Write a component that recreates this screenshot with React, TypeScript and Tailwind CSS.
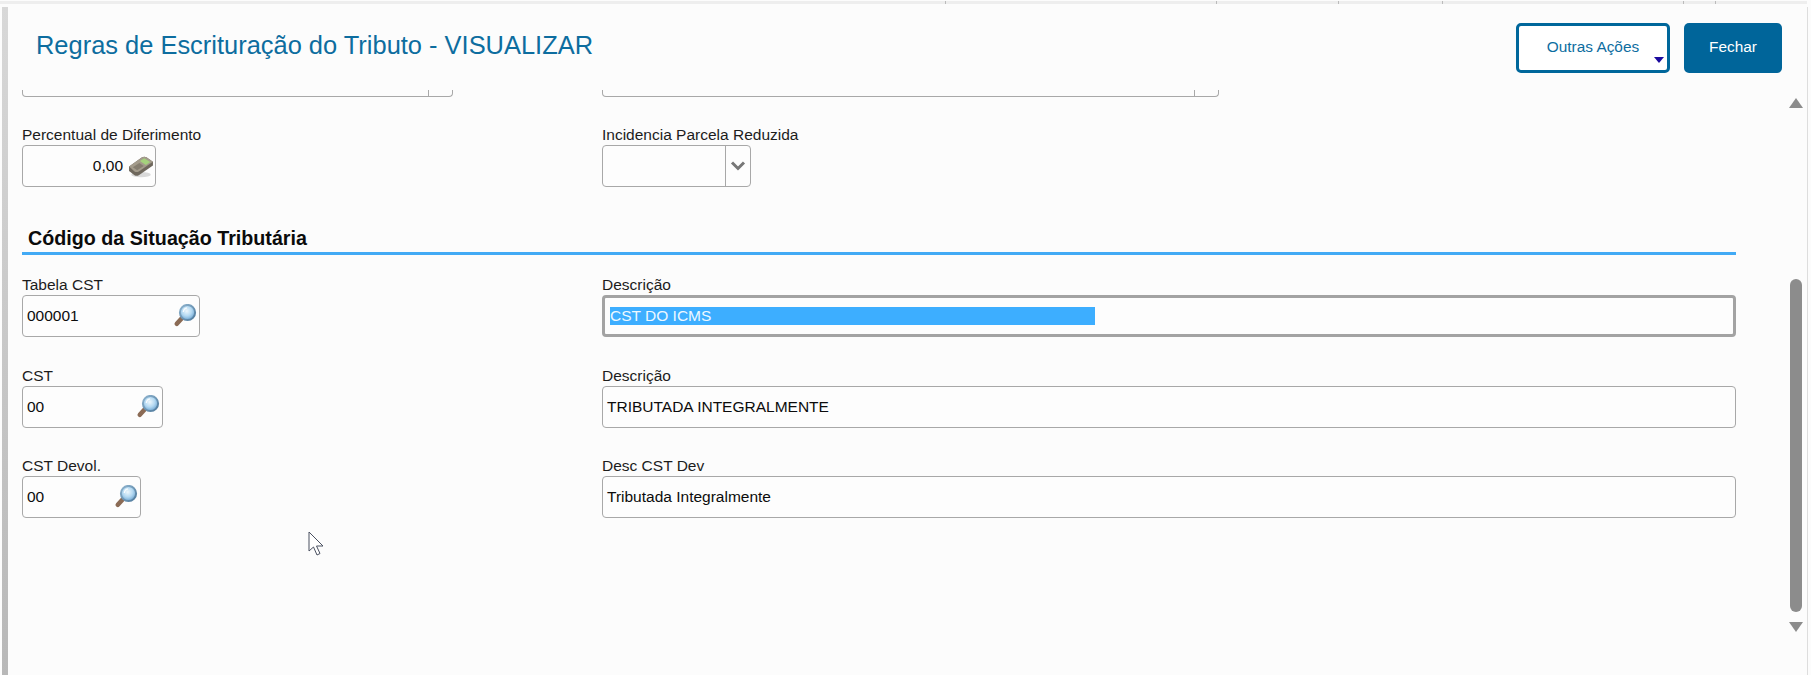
import React from "react";

const font = { fontFamily: '"Liberation Sans", Arial, sans-serif' };

function Magnifier() {
  return (
    <svg width="24" height="24" viewBox="0 0 24 24" className="shrink-0">
      <defs>
        <radialGradient id="lens" cx="45%" cy="40%" r="60%">
          <stop offset="0%" stopColor="#eef7fc" />
          <stop offset="55%" stopColor="#b4d9f2" />
          <stop offset="100%" stopColor="#6fa6d2" />
        </radialGradient>
        <linearGradient id="rim" x1="0" y1="0" x2="1" y2="1">
          <stop offset="0%" stopColor="#8fb4cf" />
          <stop offset="100%" stopColor="#4f7a9c" />
        </linearGradient>
      </defs>
      <path d="M9.5 13.5 L3.8 19.8" stroke="#8b6b55" strokeWidth="4.6" strokeLinecap="round" />
      <circle cx="14.5" cy="8.5" r="7.6" fill="url(#lens)" stroke="url(#rim)" strokeWidth="2" />
      <path d="M10.3 8 A4.6 4.6 0 0 1 14 3.9" stroke="#ffffff" strokeWidth="1.3" fill="none" opacity="0.85" />
    </svg>
  );
}

function Calc() {
  return (
    <svg width="26" height="26" viewBox="0 0 24 24" className="shrink-0">
      <ellipse cx="12" cy="20" rx="9" ry="2.4" fill="#d9d9d9" />
      <path d="M1 12.5 L13 4 Q15 3 17 4 L23 8 L23 11.5 L10 20.5 Q8 21.5 6 20.5 L1 16.5 Z" fill="#6e675c" />
      <path d="M1 12.5 L13 4 Q15 3 17 4 L23 8 L10 17 Q8 18 6 17 Z" fill="#a39b8b" />
      <path d="M11 7.4 L15 4.8 L20.5 8.3 L16.5 11 Z" fill="#a4d27c" />
      <path d="M4.5 13.2 L10.5 9.2 L14.5 12 L8.5 16 Z" fill="#857d6f" />
    </svg>
  );
}

function Field({
  label,
  width,
  children,
  focus,
}: {
  label: string;
  width?: string;
  children?: React.ReactNode;
  focus?: boolean;
}) {
  return (
    <div className="flex flex-col">
      <div className="h-5 text-[15.5px] leading-5 text-[#1c1c1c] whitespace-nowrap">{label}</div>
      <div
        className={`h-[42px] rounded-[4px] flex items-center bg-[#fdfdfd] text-[15.5px] text-[#0c0c0c] ${
          focus ? "border-[3px] border-[#a3a3a3]" : "border border-[#a8a8a8]"
        } ${width ?? "w-full"}`}
      >
        {children}
      </div>
    </div>
  );
}

export default function App() {
  return (
    <div style={font} className="w-[1811px] h-[675px] overflow-hidden bg-[#fcfcfc] flex flex-col">
      <div className="relative mt-[1px] h-[3px] bg-[#eeeeee] shrink-0 w-[1807px]">
        <span className="absolute left-[945px] top-0 h-[3px] w-[1px] bg-[#bbbbbb]" />
        <span className="absolute left-[1216px] top-0 h-[3px] w-[1px] bg-[#bbbbbb]" />
        <span className="absolute left-[1338px] top-0 h-[3px] w-[1px] bg-[#bbbbbb]" />
        <span className="absolute left-[1442px] top-0 h-[3px] w-[1px] bg-[#bbbbbb]" />
        <span className="absolute left-[1683px] top-0 h-[3px] w-[1px] bg-[#bbbbbb]" />
        <span className="absolute left-[1715px] top-0 h-[3px] w-[1px] bg-[#bbbbbb]" />
      </div>
      <div className="flex flex-1 min-h-0">
        <div className="ml-[2px] mt-[3px] w-[6px] shrink-0 bg-gradient-to-b from-[#d8d8d8] to-[#b8b8b8]" />
        <div className="flex-1 min-w-0 flex flex-col">
          {/* header */}
          <div className="h-[86px] shrink-0 flex items-start justify-between pl-[28px] pr-[25px]">
            <h1 className="mt-[23px] text-[25.45px] leading-[36px] text-[#0d6d9f] whitespace-nowrap">
              Regras de Escrituração do Tributo - VISUALIZAR
            </h1>
            <div className="mt-[19px] flex gap-[14px]">
              <button className="relative w-[154px] h-[50px] rounded-[5px] border-[3px] border-[#00679b] bg-white text-[15.4px] text-[#0d6d9f] pb-[2px]">
                Outras Ações
                <span className="absolute right-[3px] bottom-[7px] w-0 h-0 border-l-[5px] border-r-[5px] border-t-[6px] border-l-transparent border-r-transparent border-t-[#1b0a9e]" />
              </button>
              <button className="w-[98px] h-[50px] rounded-[5px] bg-[#00659a] text-[15.4px] text-white pb-[2px]">
                Fechar
              </button>
            </div>
          </div>

          {/* body */}
          <div className="flex-1 min-h-0 flex">
            <div className="w-[1728px] pl-[14px] shrink-0">
              <div className="grid grid-cols-[580px_1134px]">
                <div className="h-[7px] w-[431px] rounded-b-[4px] border border-t-0 border-[#a8a8a8] flex justify-end">
                  <div className="w-[24px] border-l border-[#a8a8a8]" />
                </div>
                <div className="h-[7px] w-[617px] rounded-b-[4px] border border-t-0 border-[#a8a8a8] flex justify-end">
                  <div className="w-[24px] border-l border-[#a8a8a8]" />
                </div>

                <div className="mt-[28px]">
                  <Field label="Percentual de Diferimento" width="w-[134px]">
                    <span className="ml-auto">0,00</span>
                    <span className="ml-[5px] mr-[1px]">
                      <Calc />
                    </span>
                  </Field>
                </div>
                <div className="mt-[28px]">
                  <Field label="Incidencia Parcela Reduzida" width="w-[149px]">
                    <div className="ml-auto h-full w-[25px] border-l border-[#a8a8a8] flex items-center justify-center">
                      <svg width="16" height="12" viewBox="0 0 16 12">
                        <path d="M2 2.5 L8 8.5 L14 2.5" fill="none" stroke="#777777" strokeWidth="3" />
                      </svg>
                    </div>
                  </Field>
                </div>
              </div>

              <div className="mt-[39px] w-[1714px] h-[29px] border-b-[3px] border-[#42aaf5] pl-[6px] text-[19.7px] leading-[24px] font-bold text-[#0b0b0b] whitespace-nowrap">
                Código da Situação Tributária
              </div>

              <div className="mt-[20px] grid grid-cols-[580px_1134px] gap-y-[28.5px]">
                <Field label="Tabela CST" width="w-[178px]">
                  <span className="ml-[4px]">000001</span>
                  <span className="ml-auto mr-[2px]">
                    <Magnifier />
                  </span>
                </Field>
                <Field label="Descrição" focus>
                  <div className="ml-[5px] w-[485px] h-[18px] bg-[#3daeff] text-[#eef8ff] text-[15.5px] leading-[18px]">
                    CST DO ICMS
                  </div>
                </Field>

                <Field label="CST" width="w-[141px]">
                  <span className="ml-[4px]">00</span>
                  <span className="ml-auto mr-[2px]">
                    <Magnifier />
                  </span>
                </Field>
                <Field label="Descrição">
                  <span className="ml-[4px]">TRIBUTADA INTEGRALMENTE</span>
                </Field>

                <Field label="CST Devol." width="w-[119px]">
                  <span className="ml-[4px]">00</span>
                  <span className="ml-auto mr-[2px]">
                    <Magnifier />
                  </span>
                </Field>
                <Field label="Desc CST Dev">
                  <span className="ml-[4px]">Tributada Integralmente</span>
                </Field>
              </div>

              <svg width="18" height="26" viewBox="0 0 18 26" className="ml-[286px] mt-[13px]">
                <path
                  d="M1 1 L1 20 L5.5 16 L9 24 L12 22.5 L8.5 15 L15 15 Z"
                  fill="#ffffff"
                  stroke="#4a5060"
                  strokeWidth="1"
                />
              </svg>
            </div>

            {/* scrollbar */}
            <div className="ml-[53px] mt-[8px] w-[14px] shrink-0 flex flex-col items-center">
              <div className="w-0 h-0 border-l-[7px] border-r-[7px] border-b-[10px] border-l-transparent border-r-transparent border-b-[#8c8c8c]" />
              <div className="mt-[171px] w-[12px] h-[333px] rounded-[6px] bg-[#8c8c8c]" />
              <div className="mt-[10px] w-0 h-0 border-l-[7px] border-r-[7px] border-t-[10px] border-l-transparent border-r-transparent border-t-[#8c8c8c]" />
            </div>
          </div>
        </div>
        <div className="w-[1px] mr-[3px] mt-[3px] bg-[#dddddd] shrink-0" />
      </div>
    </div>
  );
}
